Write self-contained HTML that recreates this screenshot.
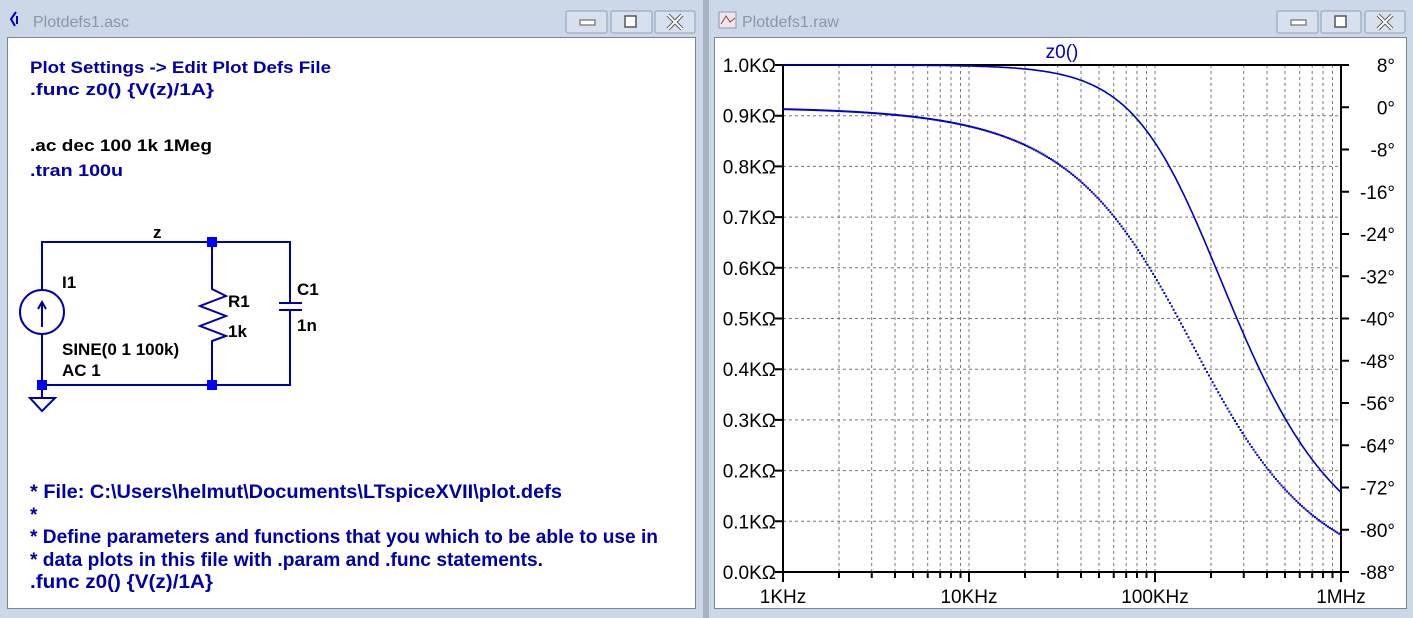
<!DOCTYPE html>
<html><head><meta charset="utf-8"><style>
html,body{margin:0;padding:0;background:#c8d5e6;width:1413px;height:618px;overflow:hidden}
svg{display:block}
text{font-family:"Liberation Sans",sans-serif}
</style></head><body>
<svg id="s" width="1413" height="618" xmlns="http://www.w3.org/2000/svg">
<rect x="0" y="0" width="1413" height="618" fill="#cbd8e8"/>
<rect x="703" y="0" width="6" height="618" fill="#a9b4c2"/>
<text x="33" y="27" font-size="16" fill="#8a97a8">Plotdefs1.asc</text>
<path d="M16 12 L11 19 L15 26 M17 16 L17 24" stroke="#0000c0" stroke-width="2" fill="none"/>
<g fill="#d7e1ee" stroke="#8ea0b6"><rect x="566" y="11" width="41" height="22" rx="2"/><rect x="611" y="11" width="41" height="22" rx="2"/><rect x="655" y="11" width="40" height="22" rx="2"/></g>
<rect x="580" y="20" width="15" height="5" fill="#fff" stroke="#555"/>
<rect x="625" y="16" width="11" height="11" fill="#fff" stroke="#555" stroke-width="1.5"/>
<path d="M668 15 L682 29 M682 15 L668 29" stroke="#555" stroke-width="4"/><path d="M668 15 L682 29 M682 15 L668 29" stroke="#fff" stroke-width="2"/>
<rect x="719" y="12" width="17" height="16" fill="#e8e8f0" stroke="#999"/>
<path d="M721 24 L726 16 L730 22 L735 18" stroke="#c03030" fill="none"/>
<text x="742" y="27" font-size="16" fill="#8a97a8">Plotdefs1.raw</text>
<g fill="#d7e1ee" stroke="#8ea0b6"><rect x="1277" y="11" width="41" height="22" rx="2"/><rect x="1321" y="11" width="40" height="22" rx="2"/><rect x="1365" y="11" width="40" height="22" rx="2"/></g>
<rect x="1291" y="20" width="15" height="5" fill="#fff" stroke="#555"/>
<rect x="1335" y="16" width="11" height="11" fill="#fff" stroke="#555" stroke-width="1.5"/>
<path d="M1378 15 L1392 29 M1392 15 L1378 29" stroke="#555" stroke-width="4"/><path d="M1378 15 L1392 29 M1392 15 L1378 29" stroke="#fff" stroke-width="2"/>
<rect x="7.5" y="37.5" width="688" height="571" fill="#fff" stroke="#7a8594"/>
<rect x="714.5" y="37.5" width="692" height="571" fill="#fff" stroke="#7a8594"/>
<g font-weight="bold" font-size="17">
<text x="30" y="73" fill="#0000a8" textLength="301" lengthAdjust="spacingAndGlyphs">Plot Settings -&gt; Edit Plot Defs File</text>
<text x="30" y="95" fill="#0000a8" textLength="184" lengthAdjust="spacingAndGlyphs">.func z0() {V(z)/1A}</text>
<text x="30" y="151" fill="#000" textLength="182" lengthAdjust="spacingAndGlyphs">.ac dec 100 1k 1Meg</text>
<text x="30" y="176" fill="#0000a8" textLength="93" lengthAdjust="spacingAndGlyphs">.tran 100u</text>
<g font-size="19" fill="#0000a8">
<text x="30" y="498" textLength="532" lengthAdjust="spacingAndGlyphs">* File: C:\Users\helmut\Documents\LTspiceXVII\plot.defs</text>
<text x="30" y="521">*</text>
<text x="30" y="543" textLength="628" lengthAdjust="spacingAndGlyphs">* Define parameters and functions that you which to be able to use in</text>
<text x="30" y="566" textLength="513" lengthAdjust="spacingAndGlyphs">* data plots in this file with .param and .func statements.</text>
<text x="30" y="588" textLength="183" lengthAdjust="spacingAndGlyphs">.func z0() {V(z)/1A}</text>
</g>
</g>
<g stroke="#0000a8" stroke-width="2" fill="none">
<path d="M42 290 V242 H290 V303 M42 334 V385 H290 V310"/>
<circle cx="42" cy="312" r="22"/>
<path d="M42 327 V303 M38 309 L42 302 L46 309"/>
<path d="M42 385 V398 M30 398 H55 L42 411 Z"/>
<path d="M212 242 V289 L226 296 L200 306 L226 316 L200 326 L226 336 L212 341 V385"/>
<path d="M279 303 H302 M279 310 H302"/>
</g>
<g fill="#0000ff"><rect x="207" y="237" width="10" height="10"/><rect x="37" y="380" width="10" height="10"/><rect x="207" y="380" width="10" height="10"/></g>
<g font-weight="bold" font-size="17" fill="#000">
<text x="153" y="238">z</text><text x="62" y="288">I1</text><text x="228" y="307">R1</text><text x="228" y="337">1k</text>
<text x="297" y="295">C1</text><text x="297" y="331">1n</text><text x="62" y="355">SINE(0 1 100k)</text><text x="62" y="376">AC 1</text>
</g>
<g id="plot"></g>
</svg>
<script>
var ns="http://www.w3.org/2000/svg",g=document.getElementById("plot");
function el(t,a,txt){var e=document.createElementNS(ns,t);for(var k in a)e.setAttribute(k,a[k]);if(txt!=null)e.textContent=txt;g.appendChild(e);return e;}
var X0=783,X1=1341,Y0=65,Y1=572,D=(X1-X0)/3;
function xf(f){return X0+Math.log10(f/1000)*D;}
var grid="";
for(var d=0;d<3;d++)for(var m=2;m<=10;m++){var x=X0+(d+Math.log10(m))*D;if(m<10||d<2){grid+="M"+x.toFixed(1)+" "+Y0+"V"+Y1;}}
for(var i=1;i<10;i++){var y=Y0+i*(Y1-Y0)/10;grid+="M"+X0+" "+y.toFixed(1)+"H"+X1;}
el("path",{d:grid,stroke:"#777","stroke-width":1,"stroke-dasharray":"3,3",fill:"none"});
el("path",{d:"M"+X0+" "+Y0+"V"+Y1+"H"+X1+"V"+Y0+"M"+X0+" "+Y0+"H"+X1,stroke:"#000","stroke-width":2,fill:"none"});
var t="";
for(var i=0;i<=10;i++){var y=Y0+i*(Y1-Y0)/10;t+="M"+(X0-8)+" "+y+"H"+X0;
el("text",{x:X0-7,y:y+7,"font-size":19,"text-anchor":"end",fill:"#000"},(1-i/10).toFixed(1)+"KΩ");}
for(var i=0;i<=12;i++){var y=Y0+i*(Y1-Y0)/12;t+="M"+X1+" "+y+"H"+(X1+8);
el("text",{x:1395,y:y+7,"font-size":19,"text-anchor":"end",fill:"#000"},(8-8*i)+"°");}
for(var d=0;d<3;d++)for(var m=1;m<=10;m++){var x=X0+(d+Math.log10(m))*D;var L=(m==1||m==10)?10:6;t+="M"+x+" "+Y1+"V"+(Y1+L);}
el("path",{d:t,stroke:"#000","stroke-width":2,fill:"none"});
var lab=["1KHz","10KHz","100KHz","1MHz"];
for(var d=0;d<4;d++)el("text",{x:X0+d*D,y:603,"font-size":19,"text-anchor":"middle",fill:"#000"},lab[d]);
el("text",{x:1062,y:58,"font-size":19,"text-anchor":"middle",fill:"#0000c0"},"z0()");
var fc=1/(2*Math.PI*1e-6),p="";
for(var i=0;i<=300;i++){var f=1000*Math.pow(10,i/100),x=xf(f),r=f/fc;
var mg=1/Math.sqrt(1+r*r),ph=-Math.atan(r)*180/Math.PI;
var ym=Y1-mg*(Y1-Y0),yp=Y0+(8-ph)/96*(Y1-Y0);
p+=(i?"L":"M")+x.toFixed(1)+" "+ym.toFixed(1);
el("rect",{x:x-1,y:yp-1,width:2,height:2,fill:"#0000c0"});}
el("path",{d:p,stroke:"#0000c0","stroke-width":1.6,fill:"none"});
</script>
</body></html>
